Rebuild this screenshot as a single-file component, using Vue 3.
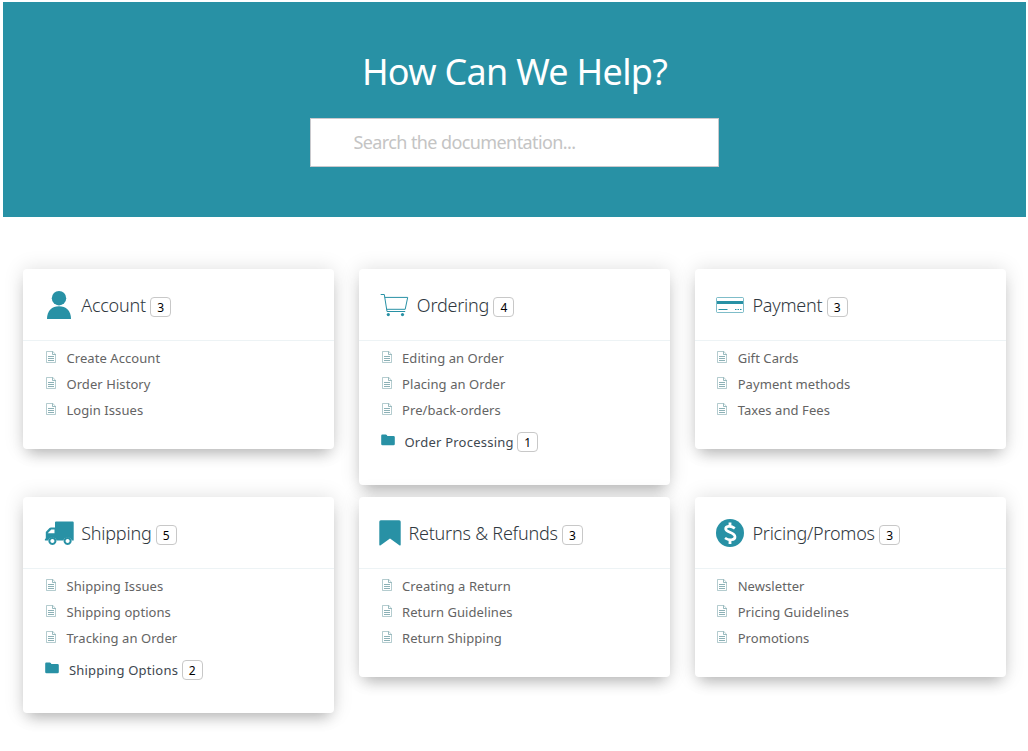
<script setup>
const cards = [
  { icon: 'user', title: 'Account', count: 3, items: ['Create Account', 'Order History', 'Login Issues'] },
  { icon: 'cart', title: 'Ordering', count: 4, items: ['Editing an Order', 'Placing an Order', 'Pre/back-orders'], folder: { title: 'Order Processing', count: 1 } },
  { icon: 'credit', title: 'Payment', count: 3, items: ['Gift Cards', 'Payment methods', 'Taxes and Fees'] },
  { icon: 'truck', title: 'Shipping', count: 5, items: ['Shipping Issues', 'Shipping options', 'Tracking an Order'], folder: { title: 'Shipping Options', count: 2 } },
  { icon: 'bookmark', title: 'Returns & Refunds', count: 3, items: ['Creating a Return', 'Return Guidelines', 'Return Shipping'] },
  { icon: 'dollar', title: 'Pricing/Promos', count: 3, items: ['Newsletter', 'Pricing Guidelines', 'Promotions'] },
]
</script>

<template>
  <main class="page">
    <header class="hero">
      <h1>How Can We Help?</h1>
      <input class="search" type="text" placeholder="Search the documentation..." />
    </header>
    <div class="grid">
      <section v-for="c in cards" :key="c.title" class="card">
        <div class="head">
          <span class="icon" :class="c.icon">
            <svg v-if="c.icon === 'user'" width="30" height="30" viewBox="0 0 30 30" fill="currentColor">
              <circle cx="15" cy="8.2" r="7.2" />
              <path d="M3 29C3 20.5 8 16.3 15 16.3S27 20.5 27 29Z" />
            </svg>
            <svg v-else-if="c.icon === 'cart'" width="30" height="30" viewBox="-.7 0 30 30" fill="none" stroke="currentColor" stroke-width="1">
              <path d="M1 4.5H4.6L7.3 21.5H25.5" />
              <path d="M5 7.4H28L25.5 19.3H7" />
              <circle cx="8.6" cy="24.6" r="1.6" fill="currentColor" stroke="none" />
              <circle cx="22.8" cy="24.6" r="1.6" fill="currentColor" stroke="none" />
            </svg>
            <svg v-else-if="c.icon === 'credit'" width="30" height="30" viewBox="0 0 30 30" fill="none" stroke="currentColor">
              <rect x="1.5" y="7.5" width="27" height="15" rx="1" stroke-width=".6" />
              <path d="M2 12.5H28" stroke-width="3" />
              <path d="M3.5 19.5H12.5" />
              <path d="M20 19.5H27" stroke-dasharray="1.5 1" />
            </svg>
            <svg v-else-if="c.icon === 'truck'" width="30" height="30" viewBox="-.5 0 30 30" fill="currentColor">
              <path fill-rule="evenodd" d="M10.5 4.5Q10.5 3.5 11.5 3.5H28.2Q29.2 3.5 29.2 4.5V22.5H27.3A4.4 4.4 0 0 0 18.9 22.5H12.1A4.4 4.4 0 0 0 3.7 22.5H.4V21L1.3 20.4V14L5 10.1Q5.6 9.5 6.4 9.5H10.5ZM10 11.4H6.8L3.2 15.2H10Z" />
              <path fill-rule="evenodd" d="M7.9 19a4 4 0 1 0 .01 0ZM7.9 21a2 2 0 1 1-.01 0ZM23.1 19a4 4 0 1 0 .01 0ZM23.1 21a2 2 0 1 1-.01 0Z" />
            </svg>
            <svg v-else-if="c.icon === 'bookmark'" width="22" height="30" viewBox="0 0 22 30" fill="currentColor">
              <path d="M1.8.2H20.2Q21.7.2 21.7 1.7V24.7Q21.7 25.8 20.7 25.4L11 18.4 1.3 25.4Q.3 25.8.3 24.7V1.7Q.3.2 1.8.2Z" />
            </svg>
            <svg v-else width="30" height="30" viewBox="0 0 30 30">
              <circle cx="15" cy="15" r="14" fill="currentColor" />
              <g fill="none" stroke="#fff">
                <path d="M19.8 10.3C15.5 7.2 10.4 8.2 10.7 11.2C11 14.3 19.8 14.5 20 18.7C20.2 22.3 14 22.8 10 20" stroke-width="2.7" />
                <path d="M15 4.5V9M15 21.5V26" stroke-width="2.8" />
              </g>
            </svg>
          </span>
          <h2>{{ c.title }}</h2>
          <span class="badge">{{ c.count }}</span>
        </div>
        <ul>
          <li v-for="item in c.items" :key="item">
            <svg class="doc" width="10" height="12" viewBox="0 0 10 12" fill="none" stroke="currentColor">
              <path d="M.5.5H6.8L9.5 3.2V11.5H.5Z" stroke-width=".7" opacity=".75" />
              <path d="M6.5.5V3.5H9.5" stroke-width=".7" />
              <path d="M2 5.5H8M2 7.5H8M2 9.5H8" stroke-width=".8" />
            </svg>
            <a>{{ item }}</a>
          </li>
        </ul>
        <div v-if="c.folder" class="folder">
          <svg width="14" height="12" viewBox="0 0 14 12" fill="currentColor">
            <path d="M1.3.5H4.7Q5.4.5 5.8 1.1L6.4 2H12.5Q13.8 2 13.8 3.2V10Q13.8 11.2 12.5 11.2H1.5Q.2 11.2.2 10V1.7Q.2.5 1.3.5Z" />
          </svg>
          <a>{{ c.folder.title }}</a>
          <span class="badge">{{ c.folder.count }}</span>
        </div>
      </section>
    </div>
  </main>
</template>

<style>
body { background: #fff; }
</style>

<style scoped>
.page {
  box-sizing: border-box;
  height: 751px;
  overflow: hidden;
  padding: 2px 2px 0 3px;
  font-family: "Noto Sans", "Open Sans", sans-serif;
}
.hero {
  box-sizing: border-box;
  height: 215px;
  padding-top: 45px;
  display: flex;
  flex-direction: column;
  align-items: center;
  background: #2891a5;
}
h1 {
  margin: 0 0 21px;
  font-size: 36px;
  line-height: 50px;
  font-weight: 400;
  letter-spacing: -.7px;
  color: #fff;
  white-space: nowrap;
}
.search {
  box-sizing: border-box;
  width: 409px;
  height: 49px;
  padding: 0 42px 1px 42.5px;
  border: 1px solid #c9c9cd;
  background: #fff;
  font: 18px "Noto Sans", "Open Sans", sans-serif;
  letter-spacing: -.6px;
}
.search::placeholder { color: #c4c4c4; opacity: 1; }
.grid {
  display: grid;
  grid-template-columns: repeat(3, 311px);
  column-gap: 24.6px;
  row-gap: 12px;
  align-items: start;
  padding: 52px 0 0 20.4px;
}
.card {
  box-sizing: border-box;
  padding-bottom: 26px;
  border-radius: 4px;
  background: #fff;
  box-shadow: 0 0 20px rgba(0, 0, 0, .13), 0 9px 14px -5px rgba(0, 0, 0, .24);
}
.head {
  box-sizing: border-box;
  height: 72px;
  padding-left: 20.5px;
  display: flex;
  align-items: center;
  border-bottom: 1px solid #edf3f5;
}
.icon {
  display: flex;
  width: 30px;
  margin-right: 7.3px;
  color: #2891a5;
}
.icon.bookmark { width: 22px; margin-left: -.6px; margin-right: 7.5px; }
.icon svg { display: block; }
.icon.bookmark svg { margin-top: 4px; }
.icon.dollar svg { margin-top: 1px; }
h2 {
  margin: 1px 4.3px 0 0;
  font-size: 18px;
  line-height: 26px;
  font-weight: 300;
  letter-spacing: -.22px;
  color: #303840;
  white-space: nowrap;
}
.badge {
  box-sizing: border-box;
  width: 21px;
  height: 20px;
  margin-top: 4px;
  border: 1px solid #c8c8c8;
  border-radius: 4px;
  font-size: 12px;
  line-height: 19px;
  text-align: center;
  color: #000;
}
ul { margin: 0; padding: 4px 0 0 22.9px; list-style: none; }
li { display: flex; align-items: center; height: 26px; }
.doc { margin: -3px 10.2px 0 0; color: #6f9da3; }
a {
  font-size: 13px;
  letter-spacing: .07px;
  color: #646464;
  white-space: nowrap;
}
.folder {
  display: flex;
  align-items: center;
  height: 36px;
  padding-left: 21.8px;
  color: #2891a5;
}
.folder svg { margin: -3px 9.7px 0 0; }
.folder a { margin-top: 2px; letter-spacing: .23px; color: #404850; }
.folder .badge { margin: 2px 0 0 3.5px; }
</style>
